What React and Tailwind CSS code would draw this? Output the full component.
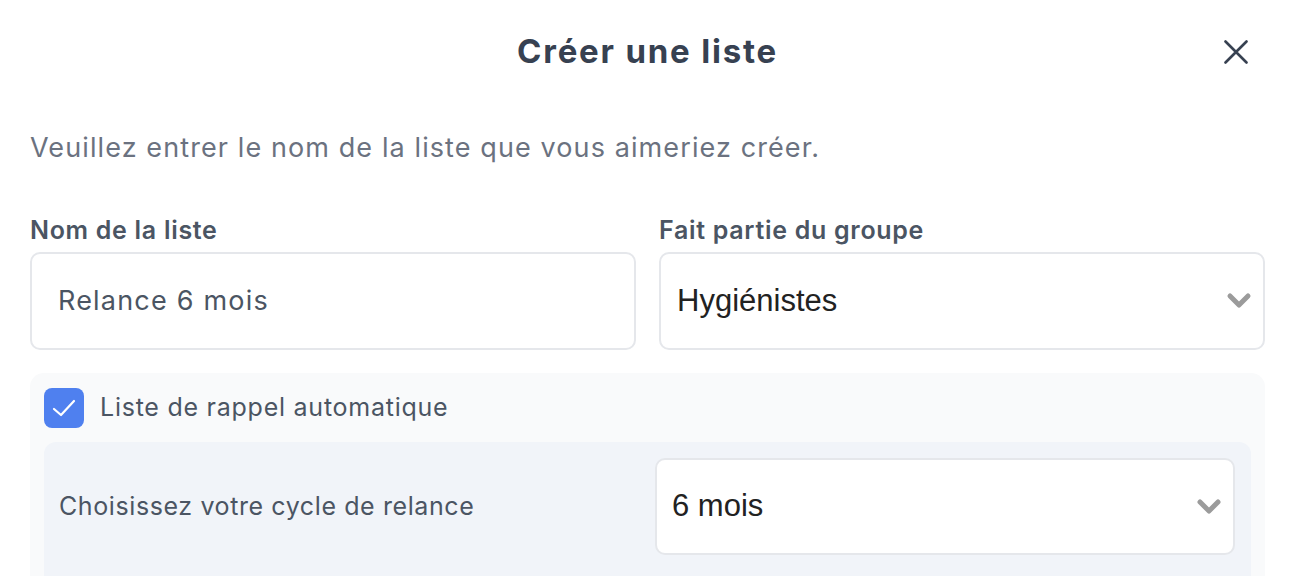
import React from 'react';

function Chevron() {
  return (
    <svg width="26" height="18" viewBox="0 0 26 18" className="shrink-0">
      <polyline points="4,4 13,13 22,4" fill="none" stroke="#9b9b9b" strokeWidth="5" strokeLinecap="round" strokeLinejoin="round" />
    </svg>
  );
}

function SelectBox({ value, className }) {
  return (
    <div className={`flex items-center justify-between bg-white border-2 border-[#e5e7eb] rounded-[10px] ${className}`}>
      <span className="font-['Liberation_Sans'] text-[31px] text-[#222]">{value}</span>
      <Chevron />
    </div>
  );
}

export default function App() {
  return (
    <div className="min-h-screen bg-white font-['Inter'] pl-[30px] pr-[35px]">
      <header className="grid grid-cols-[1fr_auto_1fr] items-center h-[104px]">
        <div />
        <h1 className="text-[33px] tracking-[1.8px] font-bold text-[#374151]">Créer une liste</h1>
        <div className="flex justify-end pr-[17px]">
          <button className="w-6 h-6">
            <svg width="24" height="24" viewBox="0 0 24 24">
              <path d="M1.5 1.5 L22.5 22.5 M22.5 1.5 L1.5 22.5" stroke="#374151" strokeWidth="2.6" strokeLinecap="round" />
            </svg>
          </button>
        </div>
      </header>

      <p className="mt-[28px] text-[27px] tracking-[1.1px] leading-[32px] text-[#6b7280]">
        Veuillez entrer le nom de la liste que vous aimeriez créer.
      </p>

      <div className="grid grid-cols-2 gap-x-[23px] mt-[51px]">
        <div>
          <label className="block text-[25px] tracking-[0.7px] leading-[30px] font-semibold text-[#4b5563]">Nom de la liste</label>
          <div className="mt-[7px] h-[98px] flex items-center px-[26px] border-2 border-[#e5e7eb] rounded-[10px]">
            <span className="text-[27px] tracking-[1.2px] text-[#4b5563]">Relance 6 mois</span>
          </div>
        </div>
        <div>
          <label className="block text-[25px] tracking-[0.7px] leading-[30px] font-semibold text-[#4b5563]">Fait partie du groupe</label>
          <SelectBox value="Hygiénistes" className="mt-[7px] h-[98px] pl-[16px] pr-[11px]" />
        </div>
      </div>

      <div className="mt-[23px] bg-[#f9fafb] rounded-[14px] px-[14px] pt-[15px] pb-10">
        <div className="flex items-center gap-[16px] h-[40px]">
          <div className="w-[40px] h-[40px] rounded-[8px] bg-[#4f80ef] flex items-center justify-center">
            <svg width="26" height="20" viewBox="0 0 26 20">
              <polyline points="3,11 10,17 23,3" fill="none" stroke="white" strokeWidth="2.2" strokeLinecap="round" strokeLinejoin="round" />
            </svg>
          </div>
          <span className="text-[25px] tracking-[0.75px] text-[#4b5563]">Liste de rappel automatique</span>
        </div>

        <div className="mt-[14px] bg-[#f1f4f9] rounded-[12px] pl-[15px] pr-[16px] pt-[16px] pb-10 grid grid-cols-[1fr_580px] items-center">
          <span className="text-[25px] tracking-[0.6px] text-[#4b5563]">Choisissez votre cycle de relance</span>
          <SelectBox value="6 mois" className="h-[97px] pl-[15px] pr-[11px]" />
        </div>
      </div>
    </div>
  );
}
